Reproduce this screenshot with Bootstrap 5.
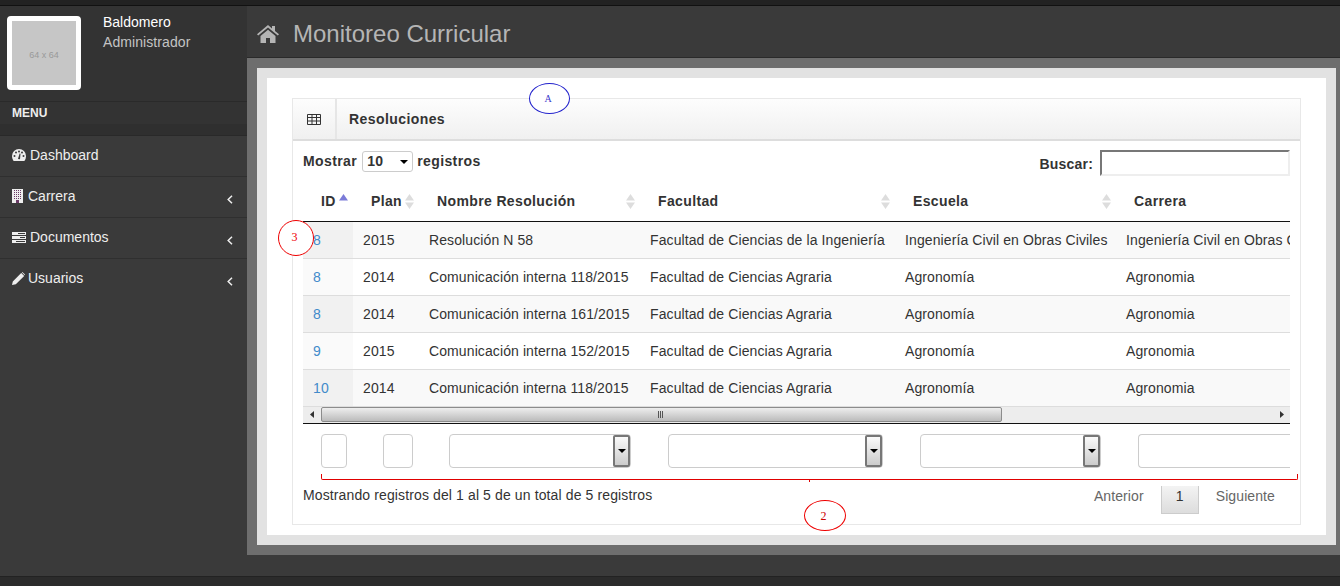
<!DOCTYPE html>
<html lang="es">
<head>
  <meta charset="UTF-8">
  <meta name="viewport" content="width=device-width, initial-scale=1.0">
  <title>Monitoreo Curricular</title>
  <link href="https://cdn.jsdelivr.net/npm/bootstrap@5.3.0/dist/css/bootstrap.min.css" rel="stylesheet">
  <style>
    html, body { height: 586px; overflow: hidden; }
    body { background: #2b2b2b; font-family: "Liberation Sans", Arial, sans-serif; font-size: 14px; color: #333; position: relative; }
    .top-strip { height: 6px; background: #222; border-bottom: 1px solid #111; }
    .shell { height: 571px; background: #3a3a3a; border-bottom: 1px solid #222; }
    .side { width: 247px; flex: none; background: #333; }
    .profile { height: 96px; padding: 10px 7px; border-bottom: 1px solid #2a2a2a; }
    .avatar { width: 74px; height: 74px; padding-top: 6px; border: 5px solid #fff; border-radius: 4px; background: #c6c6c6; color: #999; font-size: 9px; font-family: "Liberation Sans", sans-serif; }
    .uname { margin-left: 22px; color: #fff; line-height: 20px; margin-top: -4px; }
    .urole { color: #c4c4c4; letter-spacing: .08px; }
    .menu-head { height: 22px; padding-left: 12px; background: #333; color: #eee; font-size: 12px; font-weight: 700; line-height: 22px; }
    .menu-gap { height: 12px; background: #2f2f2f; border-bottom: 1px solid #292929; }
    .menu-list { background: #3a3a3a; height: 440px; }
    .menu-item { height: 41px; padding: 0 0 2px 12px; color: #eee; border-bottom: 1px solid #2f2f2f; background: #3a3a3a; text-decoration: none; }
    .menu-item:last-child { border-bottom: 0; }
    .menu-item svg.ico { margin-right: 4px; }
    .menu-item .chev { margin-left: auto; margin-right: 14px; margin-top: 6px; }
    .page-head { height: 52px; padding: 6px 0 0 10px; background: #3a3a3a; border-bottom: 1px solid #2a2a2a; }
    .page-head svg { margin-top: -2px; }
    .page-title { font-size: 24px; color: #b5b5b5; margin: 0 0 0 14px; font-weight: 400; }
    .band { background: #6e6e6e; height: 497px; padding: 10px 4px 0 10px; }
    .frame { height: 477px; background: #fff; border: 10px solid #e2e2e2; padding: 20px 25px 0; }
    .panel { height: 427px; width: 1009px; border: 1px solid #e8e8e8; border-radius: 0; }
    .panel-top { height: 42px; background: linear-gradient(#fdfdfd, #f0f0f0); border-bottom: 2px solid #ddd; }
    .panel-ico { width: 44px; height: 40px; border-right: 2px solid #e6e6e6; }
    .panel-name { margin-left: 12px; font-weight: 700; letter-spacing: .42px; color: #333; }
    .panel-main { padding: 9px 10px 0; }
    .controls { height: 31px; font-weight: 700; letter-spacing: .2px; }
    .len-wrap { margin-top: 1px; letter-spacing: .4px; }
    .len-pick { width: 51px; height: 21px; border: 1px solid #ccc; border-radius: 3px; margin: 0 4px 0 5px; padding-left: 4px; }
    .tri-down { width: 0; height: 0; border: 4px solid transparent; border-top: 4px solid #000; border-bottom: 0; }
    .find-box { width: 190px; height: 26px; border: 2px solid #eee; border-top-color: #777; border-left-color: #777; margin-left: 7px; }
    .clip { width: 987px; overflow: hidden; }
    .data-table { width: 1200px; table-layout: fixed; margin: 0; }
    .data-table th { height: 40px; padding: 1px 0 0 18px; font-weight: 700; letter-spacing: .37px; border-bottom: 1px solid #111; vertical-align: middle; position: relative; color: #333; }
    .data-table td { height: 37px; padding: 2px 0 0 10px; vertical-align: middle; border-bottom: 1px solid #ddd; white-space: nowrap; overflow: hidden; color: #333; letter-spacing: .1px; }
    .data-table tbody tr:nth-child(odd) td { background: #f9f9f9; }
    .data-table tbody td:first-child, .data-table tbody tr:nth-child(odd) td:first-child { background: #f1f1f1; }
    .data-table tbody tr:nth-child(even) td:first-child { background: #fafafa; }
    .data-table a { color: #428bca; text-decoration: none; }
    .sort-mark { position: absolute; right: 5px; top: 13px; }
    .scroll-track { height: 16px; background: #ededed; border-bottom: 1px solid #111; box-sizing: content-box; }
    .scroll-btn { width: 18px; flex: none; }
    .scroll-thumb { width: 681px; height: 15px; background: linear-gradient(#eee, #bbb); border: 1px solid #8c8c8c; border-radius: 2px; padding-right: 6px; }
    .grip { width: 6px; height: 7px; background: repeating-linear-gradient(90deg, #555 0 1px, transparent 1px 2px); margin-right: 331px; }
    .filters { height: 34px; margin-top: 10px; }
    .fld { height: 34px; border: 1px solid #ccc; border-radius: 4px; flex: none; background: #fff; }
    .fld-a { width: 26px; margin-left: 18px; }
    .fld-b { width: 30px; margin-left: 36px; }
    .fld-c { width: 182px; margin-left: 36px; }
    .fld-d { width: 215px; margin-left: 37px; }
    .fld-e { width: 181px; margin-left: 37px; }
    .fld-f { width: 160px; margin-left: 37px; border-right: 0; border-radius: 4px 0 0 4px; }
    .drop-btn { width: 17px; height: 32px; margin-left: auto; background: linear-gradient(#fafafa, #ccc); border: 2px solid #777; border-radius: 2px; }
    .foot-row { margin-top: 18px; padding-right: 15px; }
    .foot-info { margin-top: -1px; letter-spacing: .12px; }
    .pg-link { color: #666; padding: 0 17px 0 16px; text-decoration: none; letter-spacing: .1px; }
    .pg-next { padding: 0 0 0 17px; }
    .pg-on { width: 38px; height: 28px; padding: 0 0 7px; margin: 0; background: linear-gradient(#f3f3f3, #ddd); border: 1px solid #ccc; border-top: 0; color: #333; }
    .note { position: absolute; background: #fff; border-radius: 50%; border: 1px solid; font-family: "Liberation Serif", serif; font-size: 10px; }
    .note-blue { left: 529px; top: 83px; width: 41px; height: 31px; padding-right: 3px; border-color: #2222cc; color: #3a3acc; }
    .note-three { left: 278px; top: 220px; width: 36px; height: 36px; padding: 0 3px 2px 0; border-color: #e00; color: #e00; font-size: 12px; }
    .note-two { left: 804px; top: 500px; width: 42px; height: 31px; padding-right: 3px; border-color: #e00; color: #c00; font-size: 12px; }
    .brace { position: absolute; left: 321px; top: 474px; width: 977px; height: 6px; border-style: solid; border-width: 0 1px 1px; border-color: #e00000; border-radius: 0 0 2px 2px; }
    .brace-tick { position: absolute; left: 487px; top: 5px; width: 1px; height: 3px; background: #e00000; }
  </style>
</head>
<body>
  <div class="top-strip"></div>
  <div class="shell d-flex">
    <aside class="side">
      <div class="profile d-flex">
        <div class="avatar d-flex align-items-center justify-content-center">64 x 64</div>
        <div class="uname">Baldomero<br><span class="urole">Administrador</span></div>
      </div>
      <div class="menu-head">MENU</div>
      <div class="menu-gap"></div>
      <nav class="menu-list">
        <a class="menu-item d-flex align-items-center" href="#">
          <svg class="ico" width="14" height="12" viewBox="0 0 14 12"><path fill="#eee" d="M7 0a7 7 0 0 0-7 7c0 1.800.6 3.500 1.600 5h10.800A8 8 0 0 0 14 7a7 7 0 0 0-7-7z"/><g fill="#3a3a3a"><circle cx="2.500" cy="7" r="1"/><circle cx="4" cy="3.500" r="1"/><circle cx="7" cy="2.500" r="1"/><circle cx="11.500" cy="7" r="1"/><circle cx="10" cy="3.500" r="1"/><path d="M6 10l1.600-5.500.9.2L8 10.200z"/></g></svg>Dashboard</a>
        <a class="menu-item d-flex align-items-center" href="#">
          <svg class="ico" style="margin-right:5px" width="11" height="14" viewBox="0 0 11 14"><path fill="#eee" d="M0 0h11v14H0z"/><path fill="none" stroke="#6a3a65" stroke-dasharray="1 1" d="M2 1.500h7M2 3.500h7M2 5.500h7M2 7.500h7M2 9.500h7"/><path fill="#6a3a65" d="M4 11h3v3H4z"/></svg>Carrera
          <svg class="chev" width="6" height="9" viewBox="0 0 6 9"><path fill="none" stroke="#eee" stroke-width="1.500" d="M5 .8 1.200 4.500 5 8.200"/></svg></a>
        <a class="menu-item d-flex align-items-center" href="#">
          <svg class="ico" width="14" height="11" viewBox="0 0 14 11"><path fill="#eee" d="M0 0h14v3H0zM0 4h14v3H0zM0 8h14v3H0z"/><path fill="#3a3a3a" d="M6 1h7v1H6zM8 5h5v1H8zM4 9h9v1H4z"/></svg>Documentos
          <svg class="chev" width="6" height="9" viewBox="0 0 6 9"><path fill="none" stroke="#eee" stroke-width="1.500" d="M5 .8 1.200 4.500 5 8.200"/></svg></a>
        <a class="menu-item d-flex align-items-center" href="#">
          <svg class="ico" style="margin-right:3px" width="13" height="13" viewBox="0 0 13 13"><path fill="#eee" d="M0 13l.8-3.600L9.200 1l3 3-8.400 8.300zM9.900.4l.5-.4 2.600 2.600-.4.6z"/></svg>Usuarios
          <svg class="chev" width="6" height="9" viewBox="0 0 6 9"><path fill="none" stroke="#eee" stroke-width="1.500" d="M5 .8 1.200 4.500 5 8.200"/></svg></a>
      </nav>
    </aside>
    <main class="flex-grow-1">
      <header class="page-head d-flex align-items-center">
        <svg width="22" height="18" viewBox="0 0 22 18"><path fill="#b5b5b5" d="M11 0 0 9.200l1.200 1.400L11 2.600l9.800 8 1.200-1.400-4-3.300V1h-3v2.400z"/><path fill="#b5b5b5" d="M3.500 11 11 4.800l7.500 6.200V18h-5.500v-5H9v5H3.500z"/></svg>
        <h1 class="page-title">Monitoreo Curricular</h1>
      </header>
      <div class="band">
        <div class="frame">
          <section class="card panel">
            <div class="panel-top d-flex align-items-center">
              <div class="panel-ico d-flex align-items-center justify-content-center">
                <svg width="14" height="11" viewBox="0 0 14 11"><path fill="none" stroke="#333" d="M.5.500h13v10H.5zM.5 3.500h13M.5 7h13M5 .5v10M9.500 .5v10"/></svg>
              </div>
              <span class="panel-name">Resoluciones</span>
            </div>
            <div class="panel-main">
              <div class="controls d-flex justify-content-between">
                <div class="len-wrap d-flex align-items-start">Mostrar
                  <div class="len-pick d-flex align-items-center justify-content-between">10<span class="tri-down me-1"></span></div>
                  registros</div>
                <div class="d-flex align-items-start"><span class="mt-1">Buscar:</span><div class="find-box"></div></div>
              </div>
              <div class="clip">
                <table class="data-table">
                  <colgroup><col style="width:50px"><col style="width:66px"><col style="width:221px"><col style="width:255px"><col style="width:221px"><col style="width:387px"></colgroup>
                  <thead>
                    <tr>
                      <th>ID<svg class="sort-mark" width="9" height="15" viewBox="0 0 9 15"><path fill="#7b7bd8" d="M4.500 0 9 6.500H0z"/></svg></th>
                      <th>Plan<svg class="sort-mark" width="9" height="15" viewBox="0 0 9 15"><path fill="#ddd" d="M4.500 0 9 6.500H0zM4.500 15 9 8.500H0z"/></svg></th>
                      <th>Nombre Resolución<svg class="sort-mark" width="9" height="15" viewBox="0 0 9 15"><path fill="#ddd" d="M4.500 0 9 6.500H0zM4.500 15 9 8.500H0z"/></svg></th>
                      <th>Facultad<svg class="sort-mark" width="9" height="15" viewBox="0 0 9 15"><path fill="#ddd" d="M4.500 0 9 6.500H0zM4.500 15 9 8.500H0z"/></svg></th>
                      <th>Escuela<svg class="sort-mark" width="9" height="15" viewBox="0 0 9 15"><path fill="#ddd" d="M4.500 0 9 6.500H0zM4.500 15 9 8.500H0z"/></svg></th>
                      <th>Carrera</th>
                    </tr>
                  </thead>
                  <tbody>
                    <tr><td><a href="#">8</a></td><td>2015</td><td>Resolución N 58</td><td>Facultad de Ciencias de la Ingeniería</td><td>Ingeniería Civil en Obras Civiles</td><td>Ingeniería Civil en Obras Civiles</td></tr>
                    <tr><td><a href="#">8</a></td><td>2014</td><td>Comunicación interna 118/2015</td><td>Facultad de Ciencias Agraria</td><td>Agronomía</td><td>Agronomia</td></tr>
                    <tr><td><a href="#">8</a></td><td>2014</td><td>Comunicación interna 161/2015</td><td>Facultad de Ciencias Agraria</td><td>Agronomía</td><td>Agronomia</td></tr>
                    <tr><td><a href="#">9</a></td><td>2015</td><td>Comunicación interna 152/2015</td><td>Facultad de Ciencias Agraria</td><td>Agronomía</td><td>Agronomia</td></tr>
                    <tr><td><a href="#">10</a></td><td>2014</td><td>Comunicación interna 118/2015</td><td>Facultad de Ciencias Agraria</td><td>Agronomía</td><td>Agronomia</td></tr>
                  </tbody>
                </table>
                <div class="scroll-track d-flex align-items-center">
                  <div class="scroll-btn d-flex justify-content-center"><svg width="5" height="7" viewBox="0 0 5 7"><path fill="#333" d="M4 0v7L0 3.500z"/></svg></div>
                  <div class="scroll-thumb d-flex align-items-center justify-content-end"><span class="grip"></span></div>
                  <div class="scroll-btn ms-auto d-flex justify-content-center"><svg width="5" height="7" viewBox="0 0 5 7"><path fill="#333" d="M1 0v7l4-3.500z"/></svg></div>
                </div>
                <div class="filters d-flex">
                  <div class="fld fld-a"></div>
                  <div class="fld fld-b"></div>
                  <div class="fld fld-c d-flex"><span class="drop-btn d-flex align-items-center justify-content-center"><span class="tri-down"></span></span></div>
                  <div class="fld fld-d d-flex"><span class="drop-btn d-flex align-items-center justify-content-center"><span class="tri-down"></span></span></div>
                  <div class="fld fld-e d-flex"><span class="drop-btn d-flex align-items-center justify-content-center"><span class="tri-down"></span></span></div>
                  <div class="fld fld-f"></div>
                </div>
              </div>
              <div class="foot-row d-flex justify-content-between">
                <div class="foot-info">Mostrando registros del 1 al 5 de un total de 5 registros</div>
                <div class="d-flex">
                  <a class="pg-link" href="#">Anterior</a>
                  <button class="pg-on" type="button">1</button>
                  <a class="pg-link pg-next" href="#">Siguiente</a>
                </div>
              </div>
            </div>
          </section>
        </div>
      </div>
    </main>
  </div>
  <div class="brace"><span class="brace-tick"></span></div>
  <div class="note note-blue d-flex align-items-center justify-content-center">A</div>
  <div class="note note-three d-flex align-items-center justify-content-center">3</div>
  <div class="note note-two d-flex align-items-center justify-content-center">2</div>
  <script src="https://cdn.jsdelivr.net/npm/bootstrap@5.3.0/dist/js/bootstrap.bundle.min.js"></script>
</body>
</html>
